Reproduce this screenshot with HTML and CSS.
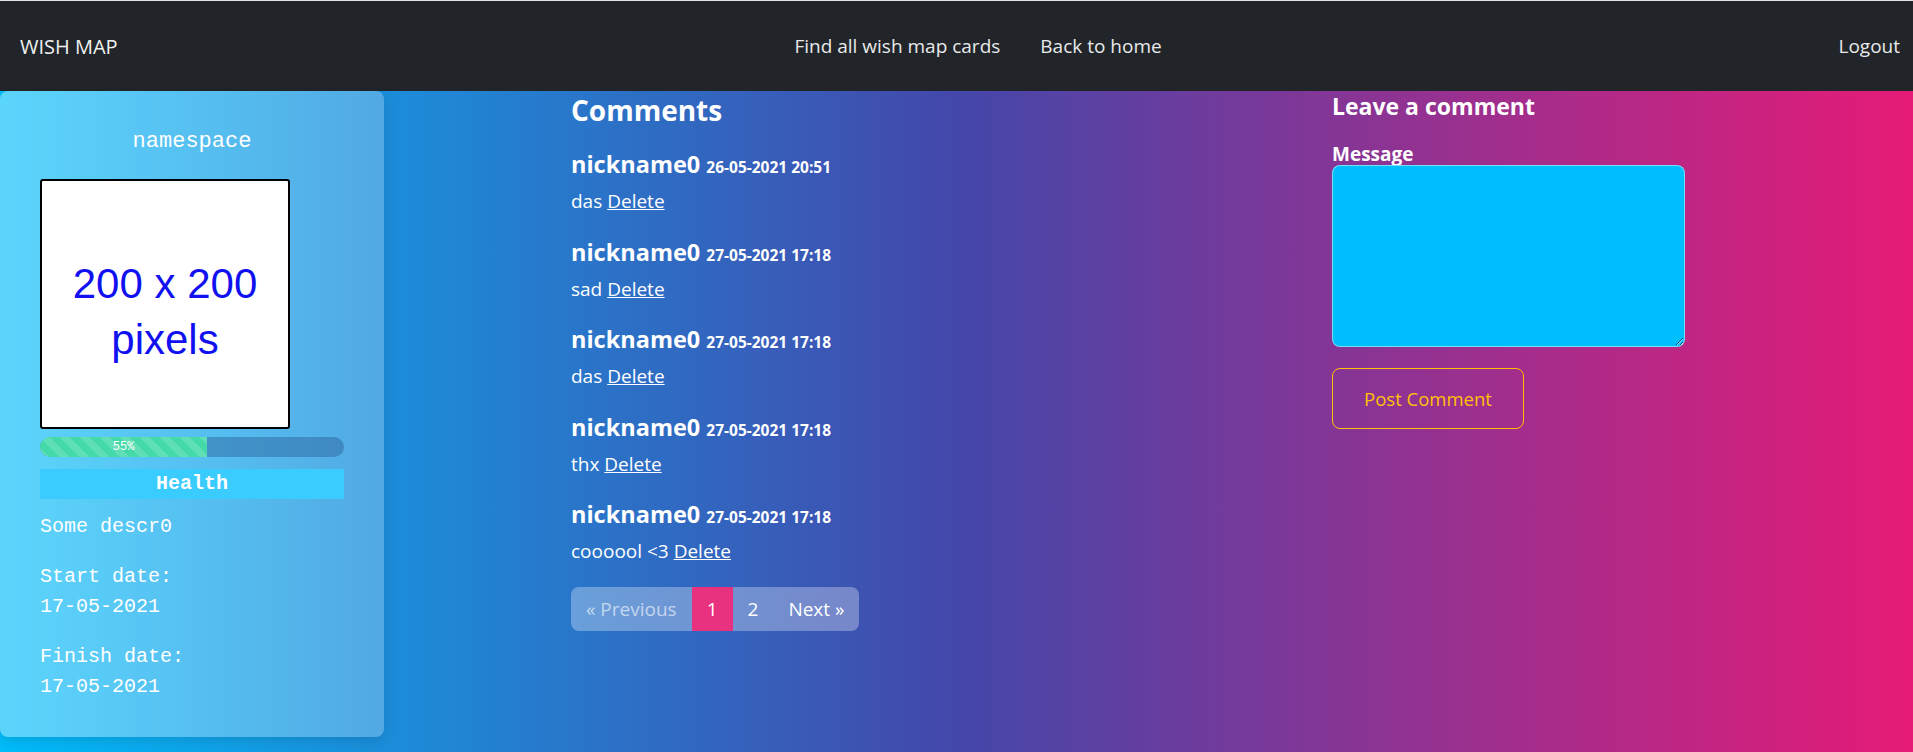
FILE: index.html
```html
<!DOCTYPE html>
<html lang="en">
<head>
<meta charset="utf-8">
<title>Wish Map</title>
<link rel="stylesheet" href="styles.css">
</head>
<body>
<nav class="navbar">
  <a class="brand" href="#">WISH MAP</a>
  <div class="nav-center">
    <a class="nav-link" href="#">Find all wish map cards</a>
    <a class="nav-link" href="#">Back to home</a>
  </div>
  <a class="nav-link logout" href="#">Logout</a>
</nav>
<main class="main">
  <div class="card-col">
    <div class="card">
      <div class="card-title">namespace</div>
      <div class="placeholder">
        <span>200 x 200</span>
        <span>pixels</span>
      </div>
      <div class="progress">
        <div class="progress-bar" style="width: 55%">55%</div>
      </div>
      <div class="health">Health</div>
      <p class="card-text">Some descr0</p>
      <p class="card-text">Start date:<br>17-05-2021</p>
      <p class="card-text">Finish date:<br>17-05-2021</p>
    </div>
  </div>
  <section class="comments">
    <h3 class="comments-title">Comments</h3>
    <div class="comment">
      <div class="comment-head"><span class="nick">nickname0</span><span class="date">26-05-2021 20:51</span></div>
      <div class="comment-body">das <a href="#" class="del">Delete</a></div>
    </div>
    <div class="comment">
      <div class="comment-head"><span class="nick">nickname0</span><span class="date">27-05-2021 17:18</span></div>
      <div class="comment-body">sad <a href="#" class="del">Delete</a></div>
    </div>
    <div class="comment">
      <div class="comment-head"><span class="nick">nickname0</span><span class="date">27-05-2021 17:18</span></div>
      <div class="comment-body">das <a href="#" class="del">Delete</a></div>
    </div>
    <div class="comment">
      <div class="comment-head"><span class="nick">nickname0</span><span class="date">27-05-2021 17:18</span></div>
      <div class="comment-body">thx <a href="#" class="del">Delete</a></div>
    </div>
    <div class="comment">
      <div class="comment-head"><span class="nick">nickname0</span><span class="date">27-05-2021 17:18</span></div>
      <div class="comment-body">coooool &lt;3 <a href="#" class="del">Delete</a></div>
    </div>
    <ul class="pagination">
      <li class="page disabled">« Previous</li>
      <li class="page active">1</li>
      <li class="page">2</li>
      <li class="page">Next »</li>
    </ul>
  </section>
  <section class="form-col">
    <h4 class="form-title">Leave a comment</h4>
    <label class="label" for="msg">Message</label>
    <textarea id="msg" class="textarea"></textarea>
    <button class="btn-post" type="button">Post Comment</button>
  </section>
</main>
</body>
</html>
```
FILE: styles.css
```css
html, body {
  margin: 0;
  padding: 0;
}
body {
  font-family: "Open Sans", "Noto Sans", sans-serif;
  color: #fff;
  background: linear-gradient(to right, #00bdfb 0%, #4447aa 50%, #e61b77 100%);
  min-height: 752px;
}
a { color: inherit; }

.navbar {
  display: flex;
  align-items: center;
  height: 90px;
  background: #212529;
  border-top: 1px solid #e3e3e3;
  padding: 0 13px 0 20px;
}
.brand {
  font-size: 20px;
  color: #f0f0f0;
  text-decoration: none;
}
.nav-center {
  flex: 1;
  display: flex;
  justify-content: center;
  gap: 40px;
}
.nav-link {
  font-size: 19px;
  color: #e9e9e9;
  text-decoration: none;
}

.main {
  display: grid;
  grid-template-columns: 571px 761px 1fr;
  align-items: start;
}
.card {
  width: 384px;
  box-sizing: border-box;
  padding: 38px 40px 15px 40px;
  background: linear-gradient(to right, rgba(255,255,255,0.36), rgba(255,255,255,0.24));
  border-radius: 8px;
  box-shadow: 0 4px 14px rgba(0,0,0,0.12);
  font-family: "Liberation Mono", "DejaVu Sans Mono", monospace;
}
.card-title {
  text-align: center;
  font-size: 22px;
  line-height: 26px;
  margin-bottom: 24px;
}
.placeholder {
  width: 250px;
  height: 250px;
  box-sizing: border-box;
  padding-top: 16px;
  border: 2px solid #000;
  border-radius: 3px;
  background: #fff;
  color: #1010f0;
  font-family: "Liberation Sans", Arial, sans-serif;
  font-size: 42px;
  line-height: 56px;
  display: flex;
  flex-direction: column;
  align-items: center;
  justify-content: center;
}
.progress {
  margin-top: 8px;
  height: 20px;
  width: 304px;
  border-radius: 10px;
  background: rgba(30,70,130,0.35);
  overflow: hidden;
}
.progress-bar {
  height: 100%;
  background-color: #43d9a8;
  background-image: linear-gradient(45deg, rgba(255,255,255,.15) 25%, transparent 25%, transparent 50%, rgba(255,255,255,.15) 50%, rgba(255,255,255,.15) 75%, transparent 75%, transparent);
  background-size: 20px 20px;
  font-size: 12px;
  line-height: 20px;
  text-align: center;
  color: #fff;
}
.health {
  margin-top: 12px;
  margin-bottom: 13px;
  width: 304px;
  height: 30px;
  line-height: 30px;
  background: #3acbff;
  text-align: center;
  font-weight: bold;
  font-size: 20px;
}
.card-text {
  margin: 0 0 20px 0;
  font-size: 20px;
  line-height: 30px;
}

.comments {
  padding-top: 2px;
}
.comments-title {
  margin: 0 0 22px 0;
  font-size: 28px;
  line-height: 34px;
  font-weight: 700;
}
.comment {
  margin-bottom: 21.6px;
}
.comment-head {
  display: flex;
  align-items: baseline;
  height: 30px;
  line-height: 30px;
}
.nick {
  font-size: 23.5px;
  font-weight: 700;
}
.date {
  margin-left: 6px;
  font-size: 15.5px;
  font-weight: 700;
}
.comment-body {
  margin-top: 8px;
  height: 28px;
  font-size: 19px;
  line-height: 28px;
}
.del {
  color: #fff;
  text-decoration: underline;
}
.pagination {
  display: inline-flex;
  list-style: none;
  margin: 0;
  padding: 0;
  height: 44px;
  border-radius: 8px;
  overflow: hidden;
  background: rgba(255,255,255,0.3);
}
.page {
  display: flex;
  align-items: center;
  padding: 0 15px;
  font-size: 19px;
  color: #fff;
}
.page.disabled {
  color: rgba(255,255,255,0.6);
}
.page.active {
  background: #e8317f;
}

.form-col {
  display: flex;
  flex-direction: column;
  align-items: flex-start;
  padding-top: 1px;
}
.form-title {
  margin: 0 0 22px 0;
  font-size: 23px;
  line-height: 29px;
  font-weight: 700;
}
.label {
  font-size: 19px;
  font-weight: 700;
  line-height: 22px;
}
.textarea {
  width: 353px;
  height: 182px;
  box-sizing: border-box;
  background: #00bfff;
  border: 1px solid rgba(255,255,255,0.45);
  border-radius: 8px;
  margin: 0;
}
.btn-post {
  margin-top: 21px;
  width: 192px;
  height: 61px;
  background: transparent;
  border: 1px solid #ffc107;
  border-radius: 8px;
  color: #ffc107;
  font-family: "Open Sans", "Noto Sans", sans-serif;
  font-size: 18.5px;
}
```
